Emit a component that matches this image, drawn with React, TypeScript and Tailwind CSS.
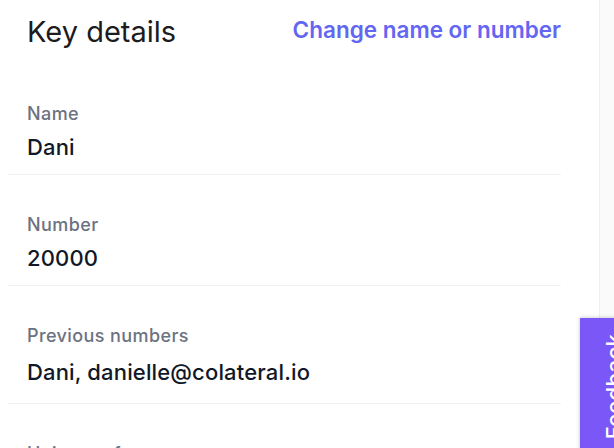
const rows = [
  { label: "Name", value: "Dani", gap: "mt-[6px]", pb: "pb-[12px]" },
  { label: "Number", value: "20000", gap: "mt-[6px]", pb: "pb-[12px]" },
  { label: "Previous numbers", value: "Dani, danielle@colateral.io", gap: "mt-[9px]", pb: "pb-[16px]" },
  { label: "Unique reference", value: "—", gap: "mt-[6px]", pb: "pb-[12px]" },
];

export default function App() {
  return (
    <div className="relative w-[614px] h-[448px] overflow-hidden flex bg-white font-['Inter',sans-serif]">
      <main className="w-[599px] bg-white">
        <div className="ml-[8px] w-[553px]">
          <div className="flex items-start justify-between pl-[19px] pt-[14px] pb-[14px]">
            <h3 className="text-[29px] leading-[36px] font-normal tracking-[0px] text-[#1c1c1e]">
              Key details
            </h3>
            <a className="pt-px text-[22.5px] leading-[30px] font-semibold text-[#6366f1]">
              Change name or number
            </a>
          </div>

          {rows.map((r) => (
            <div key={r.label} className={`pl-[19px] pt-[38px] border-b border-[#f1f2f4] ${r.pb}`}>
              <div className="text-[18px] leading-[24px] font-medium tracking-[0.4px] text-[#6b7280]">{r.label}</div>
              <div className={`text-[22px] leading-[30px] font-medium tracking-[0.15px] text-[#111827] ${r.gap}`}>{r.value}</div>
            </div>
          ))}
        </div>
      </main>

      <aside className="flex-1 bg-[#fafafa] border-l border-[#f0f0f0]" />

      <div className="absolute left-[580px] top-[318px] w-[48px] h-[140px] bg-[#7b57f8] shadow-[0_0_4px_rgba(0,0,0,0.25)] pl-[20px] pt-[16px]">
        <span className="block rotate-180 [writing-mode:vertical-rl] text-[22px] leading-[28px] font-medium text-white tracking-[0.3px]">
          Feedback
        </span>
      </div>
    </div>
  );
}
